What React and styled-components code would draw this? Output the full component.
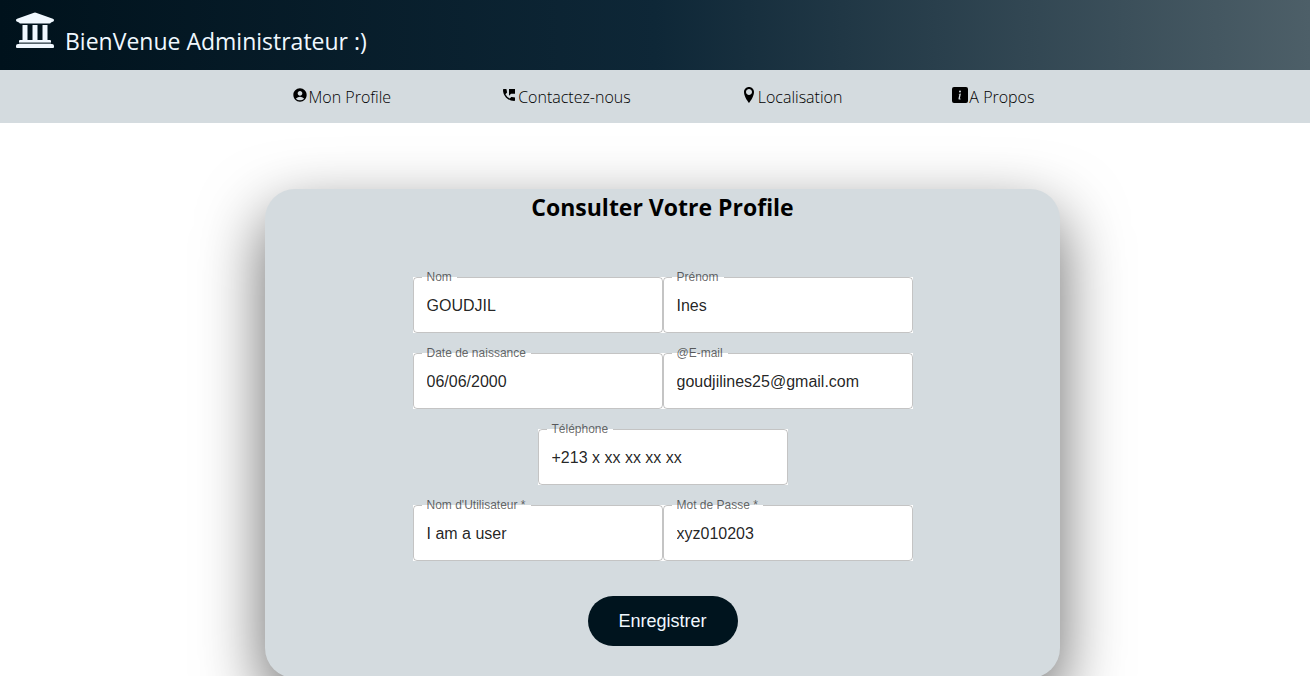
import React from "react";
import styled, { createGlobalStyle } from "styled-components";
import { MdAccountCircle, MdPermPhoneMsg } from "react-icons/md";
import { ImLocation } from "react-icons/im";
import { BsFillInfoSquareFill } from "react-icons/bs";

const GlobalStyle = createGlobalStyle`
  *, *::before, *::after { box-sizing: border-box; }
  html { scrollbar-width: none; }
  body {
    margin: 0;
    background: #fff;
    color: #000;
    font-family: "Segoe UI", "Open Sans", "Noto Sans", sans-serif;
  }
`;

const Header = styled.header`
  display: flex;
  align-items: flex-start;
  gap: 11px;
  height: 70px;
  padding: 12px 16px;
  color: aliceblue;
  background: linear-gradient(to right, #00121c, #0e2737 50%, #4d5f68);
`;

const Logo = styled.svg`
  flex: none;
  width: 38px;
  height: 36px;
`;

const Welcome = styled.h1`
  margin: 0;
  padding-top: 13px;
  font-size: 23px;
  font-weight: 400;
  line-height: 32px;
`;

const Nav = styled.nav`
  background: #d4dbdf;
`;

const NavList = styled.ul`
  display: flex;
  justify-content: center;
  gap: 110px;
  margin: 0;
  padding: 15px 0 14px 16px;
  list-style: none;
`;

const NavLink = styled.a`
  display: flex;
  align-items: flex-start;
  gap: 1px;
  color: #000;
  font-size: 16px;
  font-weight: 300;
  line-height: 24px;
  text-decoration: none;

  svg {
    flex: none;
    margin-top: 2px;
  }
`;

const Main = styled.main`
  display: flex;
  justify-content: center;
  padding: 66px 0 0 15px;
`;

const Card = styled.form`
  display: flex;
  flex-direction: column;
  align-items: center;
  width: 100%;
  max-width: 795px;
  padding-bottom: 32px;
  border-radius: 30px;
  background: #d4dbdf;
  box-shadow: 0 25px 65px rgba(0, 0, 0, 0.6);
`;

const Title = styled.h2`
  margin: 0 0 52px;
  font-size: 23px;
  font-weight: 700;
  line-height: 36px;
`;

const Fields = styled.div`
  display: flex;
  flex-direction: column;
  gap: 20px;
  margin-bottom: 35px;
`;

const Row = styled.div`
  display: flex;
  justify-content: center;
`;

const FieldBox = styled.div`
  position: relative;
  width: 250px;
  background: #fff;
  font-family: Arial, "Liberation Sans", sans-serif;
`;

const FieldInput = styled.input`
  display: block;
  width: 100%;
  height: 56px;
  padding: 2px 13px 0;
  border: 1px solid rgba(0, 0, 0, 0.23);
  border-radius: 4px;
  outline: none;
  background: transparent;
  color: rgba(0, 0, 0, 0.87);
  font-family: inherit;
  font-size: 16px;
`;

const FieldLabel = styled.label`
  position: absolute;
  top: -8px;
  left: 9px;
  padding: 0 5px;
  background: linear-gradient(#fff, #fff) 0 8px / 100% 1px no-repeat;
  color: rgba(0, 0, 0, 0.6);
  font-size: 12px;
  line-height: 16px;
`;

const SaveButton = styled.button`
  width: 150px;
  height: 50px;
  border: 0;
  border-radius: 25px;
  background: #00141e;
  color: aliceblue;
  font-family: Arial, "Liberation Sans", sans-serif;
  font-size: 18px;
  cursor: pointer;
`;

const links = [
  { text: "Mon Profile", Icon: MdAccountCircle },
  { text: "Contactez-nous", Icon: MdPermPhoneMsg },
  { text: "Localisation", Icon: ImLocation },
  { text: "A Propos", Icon: BsFillInfoSquareFill },
];

const rows = [
  [
    { id: "nom", label: "Nom", value: "GOUDJIL" },
    { id: "prenom", label: "Prénom", value: "Ines" },
  ],
  [
    { id: "naissance", label: "Date de naissance", value: "06/06/2000" },
    { id: "email", label: "@E-mail", value: "goudjilines25@gmail.com" },
  ],
  [{ id: "telephone", label: "Téléphone", value: "+213 x xx xx xx xx" }],
  [
    { id: "utilisateur", label: "Nom d'Utilisateur *", value: "I am a user", required: true },
    { id: "motdepasse", label: "Mot de Passe *", value: "xyz010203", required: true },
  ],
];

function BankLogo() {
  return (
    <Logo viewBox="0 0 38 36" fill="currentColor" aria-hidden="true">
      <path d="M18 .8q1-.5 2 0l16.900 6q1.100.4 1.100 1.400 0 1.300-1.300 1.600L35 10.400q-.4 1.100-1.500 1.100h-29q-1.100 0-1.500-1.100L1.300 9.800Q0 9.500 0 8.200q0-1 1.100-1.400z" />
      <path d="M6.500 13h5v15h-5zM16.500 13h5v15h-5zM26.500 13h5v15h-5z" />
      <path d="M4 28h30q1 0 1 1v1.500H3V29q0-1 1-1z" />
      <path d="M2 32h34q2 0 2 2v1q0 1-1 1H1q-1 0-1-1v-1q0-2 2-2z" />
      <path d="M3 30.500h32V32H3z" opacity=".35" />
    </Logo>
  );
}

function Field({ id, label, value, required }) {
  return (
    <FieldBox>
      <FieldInput id={id} type="text" defaultValue={value} required={required} />
      <FieldLabel htmlFor={id}>{label}</FieldLabel>
    </FieldBox>
  );
}

export default function App() {
  return (
    <>
      <GlobalStyle />
      <Header>
        <BankLogo />
        <Welcome>BienVenue Administrateur :)</Welcome>
      </Header>
      <Nav>
        <NavList>
          {links.map(({ text, Icon }) => (
            <li key={text}>
              <NavLink href="#">
                <Icon aria-hidden="true" />
                {text}
              </NavLink>
            </li>
          ))}
        </NavList>
      </Nav>
      <Main>
        <Card onSubmit={(event) => event.preventDefault()}>
          <Title>Consulter Votre Profile</Title>
          <Fields>
            {rows.map((fields) => (
              <Row key={fields[0].id}>
                {fields.map((field) => (
                  <Field key={field.id} {...field} />
                ))}
              </Row>
            ))}
          </Fields>
          <SaveButton type="submit">Enregistrer</SaveButton>
        </Card>
      </Main>
    </>
  );
}
